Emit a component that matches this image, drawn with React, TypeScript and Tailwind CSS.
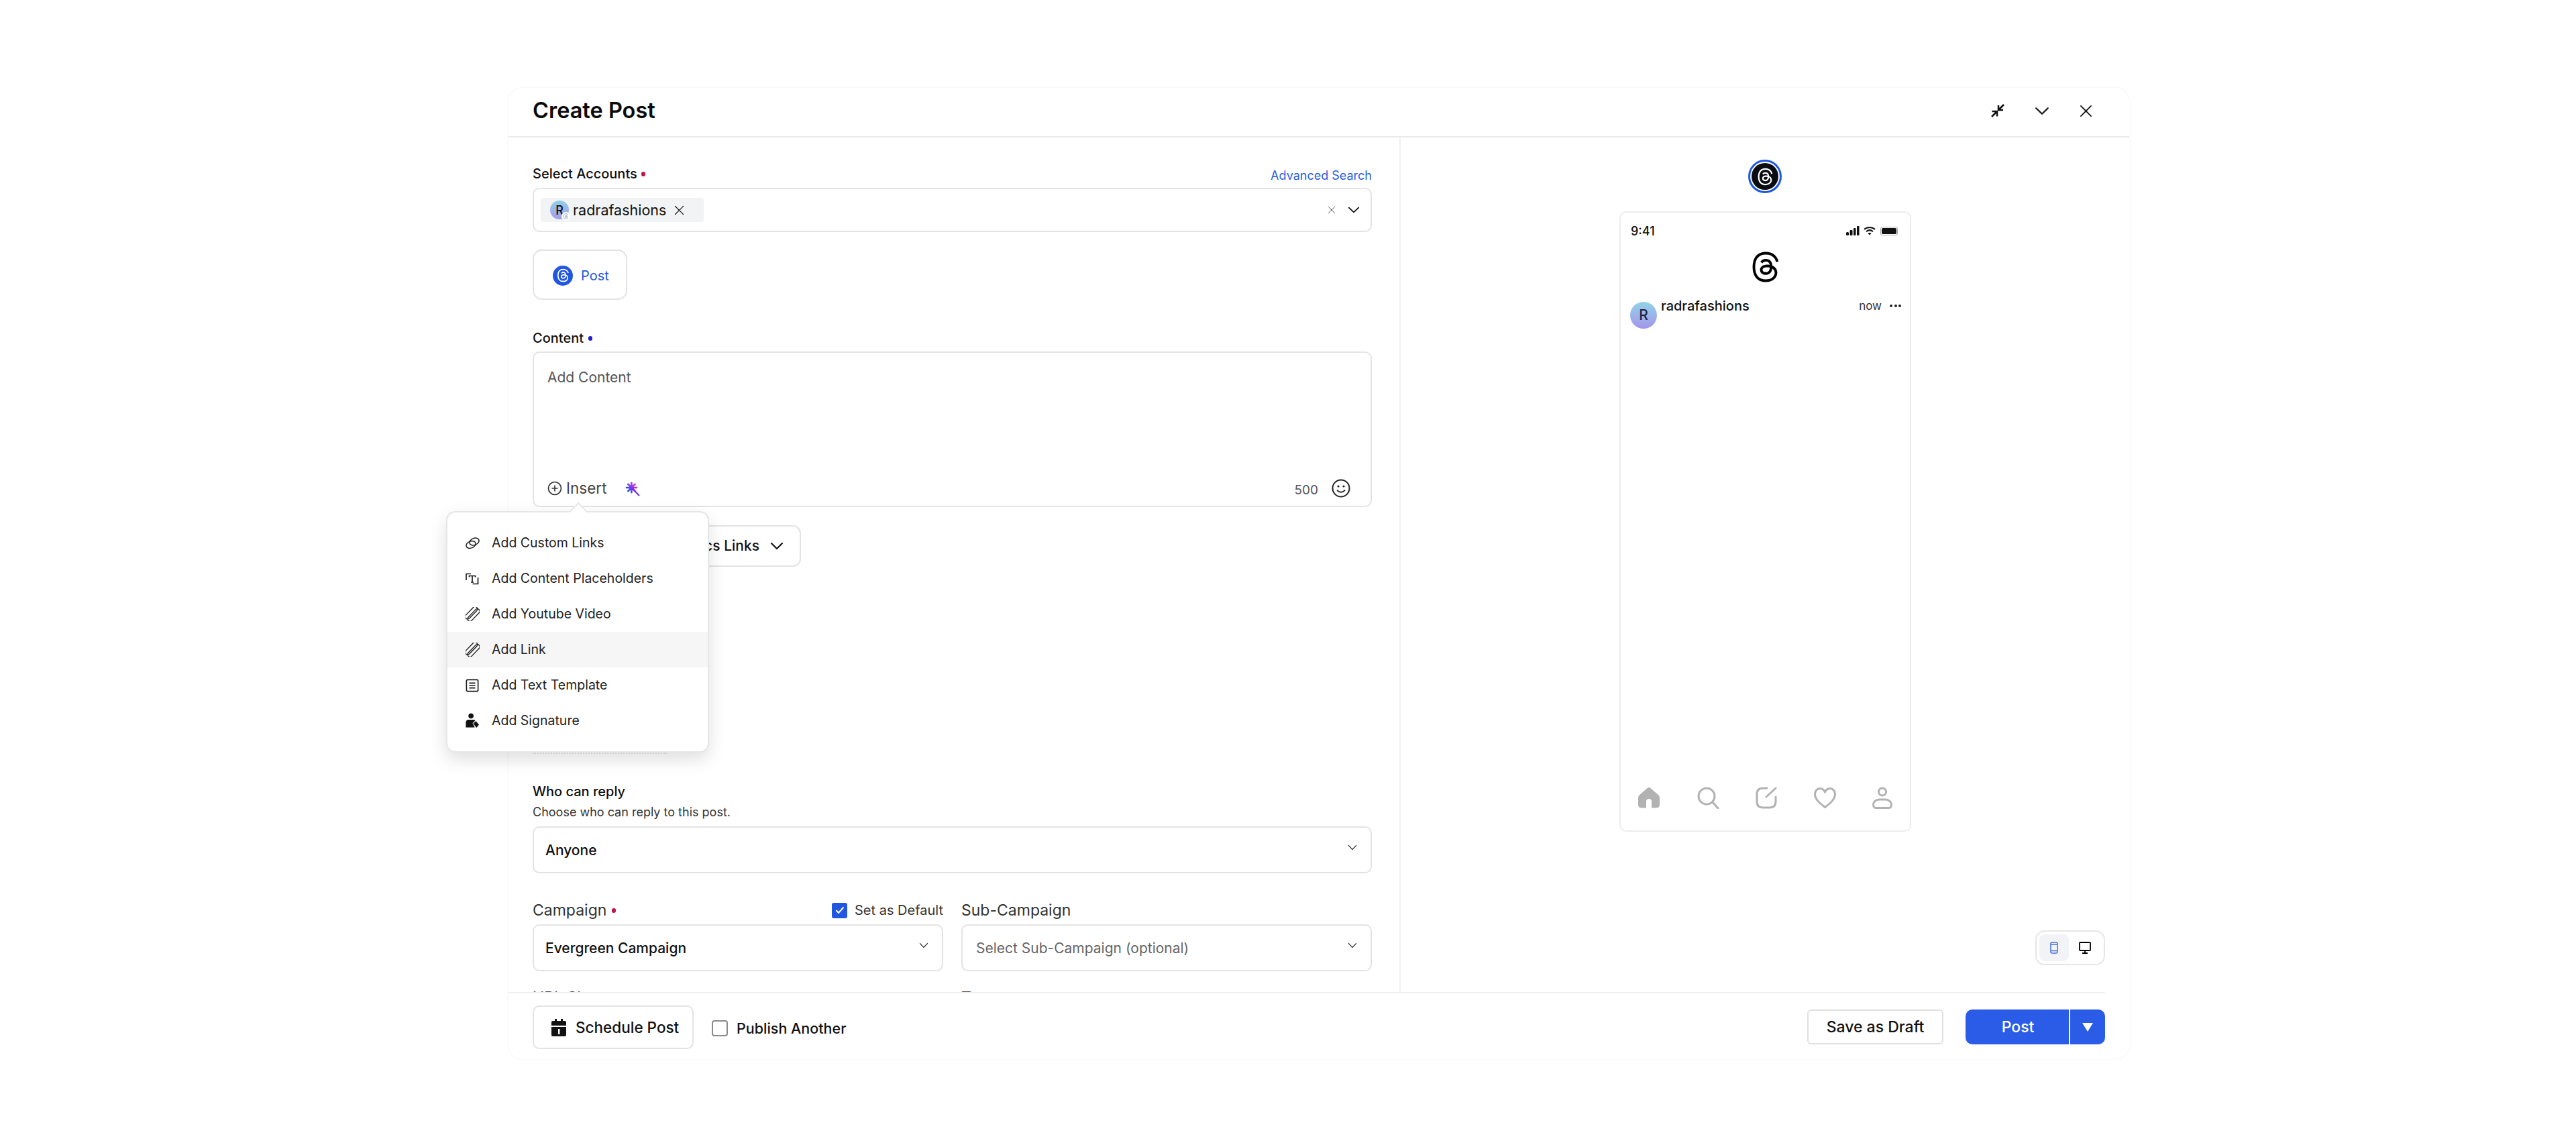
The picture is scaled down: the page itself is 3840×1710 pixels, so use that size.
import React from "react";
import { FaThreads } from "react-icons/fa6";

const Chevron = ({ w = 20, h = 12, sw = 2, cls = "" }: { w?: number; h?: number; sw?: number; cls?: string }) => (
  <svg width={w} height={h} viewBox="0 0 20 12" fill="none" stroke="currentColor" strokeWidth={sw} strokeLinecap="round" strokeLinejoin="round" className={cls} preserveAspectRatio="none">
    <path d="M2 2l8 8 8-8" />
  </svg>
);
const X = ({ s = 20, sw = 2 }: { s?: number; sw?: number }) => (
  <svg width={s} height={s} viewBox="0 0 20 20" fill="none" stroke="currentColor" strokeWidth={sw} strokeLinecap="round"><path d="M2 2l16 16M18 2L2 18" /></svg>
);
const Clip = () => (
  <svg width="21" height="21" viewBox="0 0 22 22" fill="none" stroke="#1a1a1a" strokeWidth="1.400">
    <g transform="rotate(44 11 11)">
      <rect x="4.500" y="-1" width="7.500" height="24" rx="3.750" />
      <rect x="9.500" y="-1" width="7.500" height="24" rx="3.750" />
    </g>
  </svg>
);
const Loops = () => (
  <svg width="21" height="18" viewBox="0 0 21 18" fill="none" stroke="#1a1a1a" strokeWidth="1.500">
    <ellipse cx="13" cy="6.500" rx="7.300" ry="5" transform="rotate(-22 13 6.500)" />
    <ellipse cx="8" cy="11" rx="7.300" ry="5" transform="rotate(-22 8 11)" />
  </svg>
);
const Placeholder = () => (
  <svg width="20" height="18" viewBox="0 0 20 18" fill="none" stroke="#1a1a1a" strokeWidth="1.700" strokeLinejoin="round">
    <path d="M1 11V1.500h7" />
    <path d="M18.500 7v9.500h-8" />
    <path d="M5.500 6.500V4.500h9v2M10 4.500V14M8 14h4" />
  </svg>
);
const Template = () => (
  <svg width="20" height="20" viewBox="0 0 22 22" fill="none" stroke="#1a1a1a" strokeWidth="1.800">
    <rect x="1.500" y="1.500" width="19" height="19" rx="2" />
    <path d="M6 7h10M6 11h10M6 15h10" />
  </svg>
);
const Signature = () => (
  <svg width="23" height="23" viewBox="0 0 24 24" fill="#111">
    <circle cx="9.500" cy="4.500" r="4" />
    <path d="M5 10.500h9c1 0 1.700.6 2 1.300l-4 4 3.400 6.600H1.500v-7c0-3 1.500-4.900 3.500-4.900z" />
    <path d="M17 12.500l5 5.500-4 5-5-6.500z" />
  </svg>
);
const Wand = () => (
  <svg width="22" height="22" viewBox="0 0 28 28" fill="none">
    <defs>
      <linearGradient id="wg" gradientUnits="userSpaceOnUse" x1="1" y1="15" x2="20" y2="3">
        <stop offset="0" stopColor="#1f48f0" />
        <stop offset="0.5" stopColor="#7a3cf0" />
        <stop offset="1" stopColor="#e528d0" />
      </linearGradient>
    </defs>
    <g stroke="url(#wg)" strokeWidth="3.400" strokeLinecap="round">
      <path d="M12 2.500v18M2.500 11.500h19M5.500 5l13 13M18.500 5l-13 13" />
    </g>
    <path d="M14 13l12 13" stroke="#7c2bd9" strokeWidth="2.800" strokeLinecap="round" />
  </svg>
);
const Calendar = () => (
  <svg width="22" height="26" viewBox="0 0 22 26">
    <rect x="5" y="0" width="3" height="6" fill="#111" />
    <rect x="14" y="0" width="3" height="6" fill="#111" />
    <path d="M2 3h18a2 2 0 0 1 2 2v5H0V5a2 2 0 0 1 2-2zM0 12h22v12a2 2 0 0 1-2 2H2a2 2 0 0 1-2-2z" fill="#111" />
    <rect x="10" y="15" width="2.400" height="8" fill="#fff" />
  </svg>
);
const Dot = ({ c }: { c: string }) => <span className={`inline-block w-[6px] h-[7px] rounded-full ${c}`} />;

const menu: [React.ReactNode, string, boolean][] = [
  [<Loops />, "Add Custom Links", false],
  [<Placeholder />, "Add Content Placeholders", false],
  [<Clip />, "Add Youtube Video", false],
  [<Clip />, "Add Link", true],
  [<Template />, "Add Text Template", false],
  [<Signature />, "Add Signature", false],
];

const Select = ({ children, cls = "" }: { children: React.ReactNode; cls?: string }) => (
  <div className={`h-[70px] flex items-center justify-between pr-[20px] border-2 border-[#e3e3e3] rounded-[10px] bg-white ${cls}`}>
    <span className="pt-[2px]">{children}</span>
    <span className="mb-[8px] text-[#333]"><Chevron w={14} h={9} sw={1.600} /></span>
  </div>
);

export default function App() {
  return (
    <div className="relative w-[3840px] h-[1710px] bg-white pl-[756px] pt-[129px] font-['Inter','Noto_Sans',sans-serif] text-[#111]">
      <div className="relative w-[2420px] h-[1452px] flex flex-col border-2 border-[#fafafa] rounded-[24px] bg-white">
        {/* header */}
        <div className="h-[74px] shrink-0 flex items-center justify-between pl-[36px] pr-[55px] pb-[4px] border-b-2 border-[#ebebeb]">
          <h1 className="text-[32.500px] font-semibold leading-none text-[#0b0b0b]">Create Post</h1>
          <div className="flex items-center gap-[45px] text-[#111]">
            <svg width="20" height="20" viewBox="0 0 20 20" fill="none" stroke="currentColor" strokeWidth="2.500">
              <path d="M19 1l-8 8M11 2v7h7M1 19l8-8M1.500 11H9v7.500" />
            </svg>
            <Chevron w={22} h={13} sw={2} />
            <X s={19} sw={1.900} />
          </div>
        </div>

        {/* body */}
        <div className="flex h-[1274px] shrink-0 overflow-hidden">
          <div className="w-[1328px] shrink-0 pl-[36px] pr-[41px] pt-[42px] flex flex-col">
            <div className="flex items-center justify-between h-[24px]">
              <span className="flex items-center gap-[6px] text-[20px] font-[450]"><span>Select Accounts</span><Dot c="bg-[#c4124f]" /></span>
              <span className="text-[18px] text-[#2a5ce8] pt-[4px]">Advanced Search</span>
            </div>
            <div className="mt-[9px] h-[66px] shrink-0 flex items-center justify-between pl-[10px] pr-[16px] border-2 border-[#e3e3e3] rounded-[10px]">
              <div className="h-[36px] w-[243px] flex items-center pl-[14px] gap-[6px] bg-[#f1f3f4] rounded-[4px]">
                <div className="relative w-[28px] h-[28px] rounded-full bg-gradient-to-b from-[#8fd0e8] to-[#a69be8] flex items-center justify-center text-[18px] font-medium">
                  R
                  <span className="absolute right-[-2px] bottom-[-2px] w-[13px] h-[13px] rounded-full bg-white flex items-center justify-center text-[#9aa]"><FaThreads size={9} /></span>
                </div>
                <span className="text-[21.500px] leading-none pt-[1px]">radrafashions</span>
                <span className="ml-[6px]"><X s={15} sw={1.600} /></span>
              </div>
              <div className="flex items-center gap-[18px]">
                <span className="text-[#333]"><X s={12} sw={1.400} /></span>
                <Chevron w={18} h={10} sw={2} />
              </div>
            </div>
            <div className="mt-[26px] w-[141px] h-[75px] shrink-0 flex items-center pl-[28px] gap-[12px] pt-[2px] border-2 border-[#e3e3e3] rounded-[14px]">
              <span className="w-[30px] h-[30px] rounded-full bg-[#2156e0] flex items-center justify-center text-white"><FaThreads size={21} /></span>
              <span className="text-[20px] text-[#2156e0]">Post</span>
            </div>
            <div className="mt-[45px] h-[24px] flex items-center gap-[7px] text-[20px] font-[450]"><span>Content</span><Dot c="bg-[#2120c8]" /></div>
            <div className="mt-[8px] h-[232px] shrink-0 flex flex-col justify-between border-2 border-[#e3e3e3] rounded-[10px] pl-[20px] pr-[30px] pt-[23px] pb-[12px]">
              <span className="text-[21px] text-[#555] leading-[28px]">Add Content</span>
              <div className="flex items-center justify-between h-[28px]">
                <div className="flex items-center">
                  <svg width="22" height="22" viewBox="0 0 22 22" fill="none" stroke="#333" strokeWidth="1.700" className="mr-[6px]">
                    <circle cx="11" cy="11" r="9.500" /><path d="M11 6.500v9M6.500 11h9" />
                  </svg>
                  <span className="text-[22.500px] text-[#444] leading-none">Insert</span>
                  <span className="ml-[27px] mt-[2px]"><Wand /></span>
                </div>
                <div className="flex items-center gap-[20px]">
                  <span className="text-[19px] text-[#555] mt-[6px]">500</span>
                  <svg width="28" height="28" viewBox="0 0 28 28" fill="none" stroke="#222" strokeWidth="2">
                    <circle cx="14" cy="14" r="12.500" />
                    <circle cx="10" cy="11" r="1.600" fill="#222" stroke="none" />
                    <circle cx="18" cy="11" r="1.600" fill="#222" stroke="none" />
                    <path d="M8.500 17c2.500 3.500 8.500 3.500 11 0" strokeLinecap="round" />
                  </svg>
                </div>
              </div>
            </div>
            <div className="mt-[27px] h-[62px] w-[400px] shrink-0 flex items-center justify-end pr-[24px] gap-[16px] border-2 border-[#e3e3e3] rounded-[12px]">
              <span className="text-[21px] font-[450]">Add Analytics Links</span>
              <Chevron w={20} h={12} sw={2.200} />
            </div>
            <div className="mt-[277px] h-[2px] w-[200px] shrink-0 border-b-2 border-dotted border-[#e3e3e3]" />
            <div className="mt-[44px] text-[20px] leading-[24px] font-[450] shrink-0">Who can reply</div>
            <div className="mt-[8px] text-[18px] text-[#333] leading-[22px] shrink-0">Choose who can reply to this post.</div>
            <Select cls="mt-[10px] shrink-0 pl-[17px]"><span className="text-[21px] font-[450]">Anyone</span></Select>
            <div className="mt-[40px] grid grid-cols-2 gap-x-[27px] shrink-0">
              <div className="flex items-center justify-between h-[30px]">
                <span className="flex items-center gap-[8px] text-[23px] text-[#333]"><span>Campaign</span><Dot c="bg-[#c4124f]" /></span>
                <span className="flex items-center gap-[11px]">
                  <span className="w-[23px] h-[23px] rounded-[3px] bg-[#2156e0] flex items-center justify-center">
                    <svg width="14" height="12" viewBox="0 0 14 12" fill="none" stroke="#fff" strokeWidth="2"><path d="M1.500 6l3.500 4 7.500-8.500" /></svg>
                  </span>
                  <span className="text-[20px] text-[#333]">Set as Default</span>
                </span>
              </div>
              <div className="flex items-center h-[30px] text-[23px] text-[#333]">Sub-Campaign</div>
              <Select cls="mt-[6px] pl-[17px]"><span className="text-[21px] font-medium">Evergreen Campaign</span></Select>
              <Select cls="mt-[6px] pl-[20px]"><span className="text-[21px] text-[#666]">Select Sub-Campaign (optional)</span></Select>
              <div className="mt-[22px] text-[23px] text-[#333]">URL Shortener</div>
              <div className="mt-[22px] text-[23px] text-[#333]">Tags</div>
            </div>
          </div>

          {/* preview */}
          <div className="flex-1 border-l-2 border-[#f0f0f0] flex flex-col items-center pt-[33px] pr-[36px]">
            <div className="ml-[36px] w-[50px] h-[50px] shrink-0 rounded-full border-[3px] border-[#1d59e0] p-[2px]">
              <div className="w-full h-full rounded-full bg-[#0b0b12] flex items-center justify-center text-white"><FaThreads size={27} /></div>
            </div>
            <div className="ml-[37px] mt-[27px] w-[435px] h-[925px] shrink-0 flex flex-col border-2 border-[#ececec] rounded-[10px] pl-[15px] pr-[12px]">
              <div className="flex items-center justify-between h-[52px] pt-[2px] pr-[6px]">
                <span className="text-[18px] font-medium">9:41</span>
                <div className="flex items-center gap-[6px]">
                  <svg width="20" height="14" viewBox="0 0 20 14" fill="#111"><rect x="0" y="9" width="4" height="5" rx="1.500" /><rect x="5.500" y="6" width="4" height="8" rx="1" /><rect x="11" y="3" width="3.500" height="11" rx="1" /><rect x="16" y="0" width="3.500" height="14" rx="1" /></svg>
                  <svg width="18" height="14" viewBox="0 0 18 14" fill="none" stroke="#111" strokeWidth="2"><path d="M1 5c4.500-4 11.500-4 16 0M4 8.200c3-2.500 7-2.500 10 0" /><path d="M9 13.500l-2.700-2.700c1.500-1.100 3.900-1.100 5.400 0z" fill="#111" stroke="none" /></svg>
                  <span className="ml-[1px] w-[26px] h-[13px] rounded-[3px] border border-[#aaa] p-[1px] flex"><span className="flex-1 bg-[#111] rounded-[2px]" /></span>
                </div>
              </div>
              <div className="flex justify-center h-[52px] items-center mt-[3px] pr-[3px] text-black"><FaThreads size={48} /></div>
              <div className="flex mt-[20px]">
                <div className="w-[40px] h-[40px] mt-[6px] -ml-[1px] rounded-full bg-gradient-to-b from-[#8fd4e8] to-[#a394ea] flex items-center justify-center text-[21px] font-medium text-[#1a2340]">R</div>
                <span className="ml-[6px] text-[20px] font-[450] leading-[24px]">radrafashions</span>
                <span className="ml-auto text-[17px] text-[#333] leading-[24px]">now</span>
                <span className="ml-[12px] mr-[1px] mt-[10px] flex gap-[2.500px]">
                  <span className="w-[4px] h-[4px] rounded-full bg-[#222]" /><span className="w-[4px] h-[4px] rounded-full bg-[#222]" /><span className="w-[4px] h-[4px] rounded-full bg-[#222]" />
                </span>
              </div>
              <div className="mt-auto pb-[32px] flex items-center justify-between pl-[10px] pr-[14px] text-[#b2b2b2]">
                <svg width="34" height="31" viewBox="0 0 34 31" fill="currentColor"><path d="M14 1.400a4.400 4.400 0 0 1 6 0L31 11a6 6 0 0 1 2 4.400V26a4.600 4.600 0 0 1-4.600 4.600H21V21a4 4 0 0 0-8 0v9.600H5.600A4.600 4.600 0 0 1 1 26V15.400A6 6 0 0 1 3 11z" /></svg>
                <svg width="33" height="33" viewBox="0 0 33 33" fill="none" stroke="currentColor" strokeWidth="3" strokeLinecap="round"><circle cx="14" cy="14" r="12" /><path d="M23 23l8 9" /></svg>
                <svg width="32" height="33" viewBox="0 0 32 33" fill="none" stroke="currentColor" strokeWidth="3" strokeLinecap="round"><path d="M17 2H11C5 2 2 5 2 11v11c0 6 3 9 9 9h10c6 0 9-3 9-9v-7" /><path d="M16 15L30 2" /></svg>
                <svg width="33" height="31" viewBox="0 0 33 31" fill="none" stroke="currentColor" strokeWidth="3" strokeLinejoin="round"><path d="M16.500 7C15 3.500 12.500 1.500 9 1.500 5 1.500 1.500 5 1.500 10c0 8 8 14 15 19.500 7-5.500 15-11.500 15-19.500 0-5-3.500-8.500-7.500-8.500-3.500 0-6 2-7.500 5.500z" /></svg>
                <svg width="30" height="33" viewBox="0 0 30 33" fill="none" stroke="currentColor" strokeWidth="3"><circle cx="15" cy="7.500" r="5.500" /><path d="M10 19h10c5 0 8.500 4 8.500 8 0 2.500-1.500 4.500-3.500 4.500H5c-2 0-3.500-2-3.500-4.500 0-4 3.500-8 8.500-8z" /></svg>
              </div>
            </div>
            <div className="self-end mt-[147px] w-[104px] h-[52px] shrink-0 flex items-center border-2 border-[#e6e6e6] rounded-[14px] p-[4px] bg-white">
              <span className="w-[44px] h-full rounded-[8px] bg-[#f1f3f7] flex items-center justify-center text-[#4a6fdc]">
                <svg width="12" height="18" viewBox="0 0 12 18" fill="none" stroke="currentColor" strokeWidth="1.500"><rect x="1" y="1" width="10" height="16" rx="2" /><path d="M1 4h10M1 13.500h10" /></svg>
              </span>
              <span className="flex-1 flex items-center justify-center text-black">
                <svg width="18" height="18" viewBox="0 0 18 18" fill="none" stroke="currentColor" strokeWidth="1.800"><rect x="1" y="1" width="16" height="12" rx="1" /><path d="M9 13v4M5 17h8" /></svg>
              </span>
            </div>
          </div>
        </div>

        {/* footer */}
        <div className="mr-[36px] flex-1 border-t-2 border-[#efefef] pl-[36px] flex justify-between pt-[18px]">
          <div className="flex items-start">
            <button className="w-[240px] h-[65px] flex items-center pl-[26px] gap-[14px] border-2 border-[#e3e3e3] rounded-[10px]">
              <Calendar />
              <span className="text-[22.500px] font-[450] pt-[1px]">Schedule Post</span>
            </button>
            <span className="ml-[27px] mt-[18px] flex items-center gap-[13px]">
              <span className="w-[24px] h-[24px] rounded-[4px] border-2 border-[#8a8a8a] bg-white" />
              <span className="text-[21.500px] font-[450]">Publish Another</span>
            </span>
          </div>
          <div className="flex items-start pt-[6px]">
            <button className="w-[203px] h-[52px] flex items-center justify-center border-2 border-[#e0e0e0] rounded-[6px] text-[23px] font-medium">Save as Draft</button>
            <div className="ml-[33px] w-[208px] h-[52px] flex rounded-[10px] overflow-hidden bg-[#2a5ce8] text-white">
              <span className="w-[156px] flex items-center justify-center text-[23px] font-medium border-r-2 border-white pl-[2px]">Post</span>
              <span className="flex-1 flex items-center justify-center">
                <svg width="16" height="13" viewBox="0 0 16 13" fill="#fff"><path d="M0 0h16L8 13z" /></svg>
              </span>
            </div>
          </div>
        </div>

        {/* insert popover */}
        <div className="absolute left-[-93px] top-[631px] w-[392px] h-[360px] flex flex-col justify-center bg-white border-2 border-[#e6e6e6] rounded-[14px] shadow-[0_10px_26px_rgba(0,0,0,0.13)]">
          <div className="absolute left-[185px] top-[-11px] w-[20px] h-[20px] rotate-45 bg-white border-l-2 border-t-2 border-[#e6e6e6]" />
          {menu.map(([icon, label, active]) => (
            <div key={label} className={`relative h-[53px] flex items-center pl-[25px] ${active ? "bg-[#f6f6f7]" : ""}`}>
              <span className="w-[24px] h-[24px] flex items-center justify-center">{icon}</span>
              <span className="ml-[17px] text-[19.500px] text-[#222]">{label}</span>
            </div>
          ))}
        </div>
      </div>
    </div>
  );
}
